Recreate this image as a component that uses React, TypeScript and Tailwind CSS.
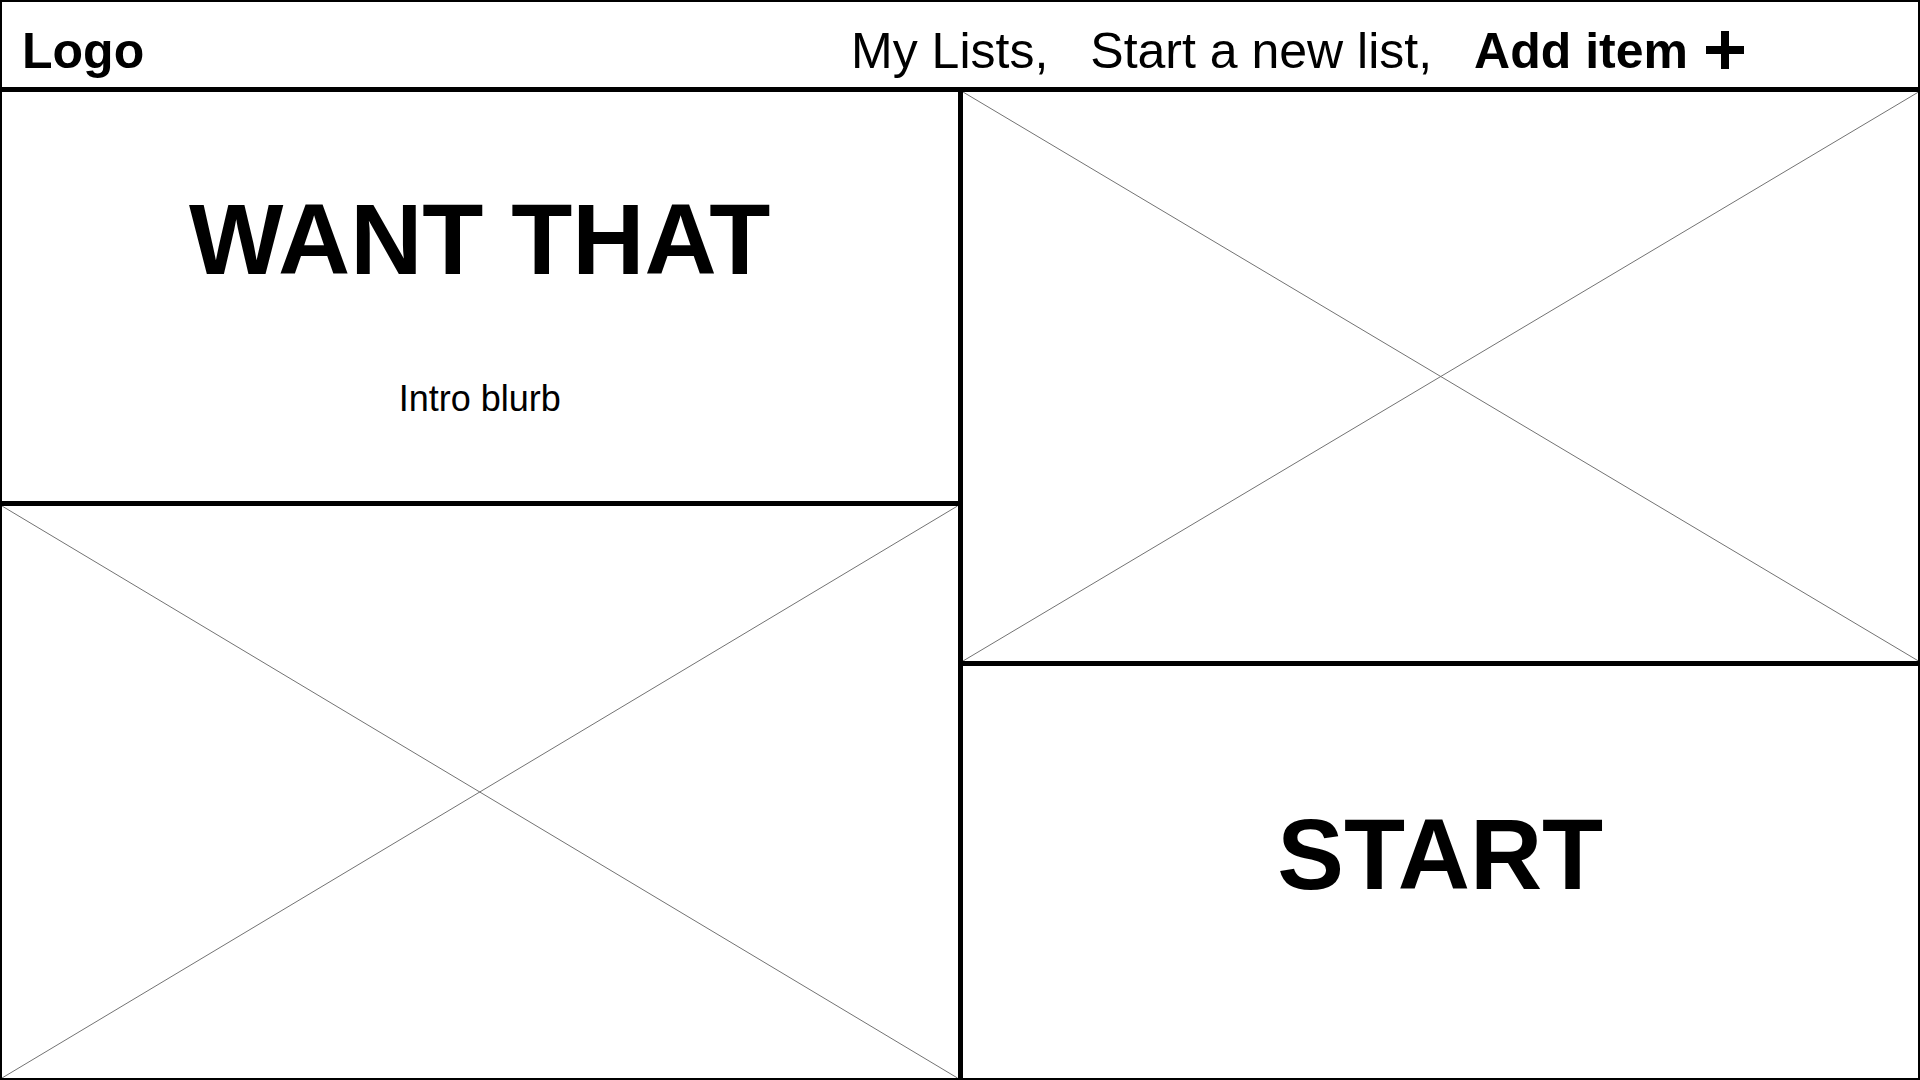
function Placeholder({ label }: { label: string }) {
  return (
    <div className="min-h-0 bg-white">
      <svg
        role="img"
        aria-label={label}
        viewBox="0 0 100 100"
        preserveAspectRatio="none"
        className="block size-full text-neutral-500"
        stroke="currentColor"
        strokeWidth="1"
      >
        <line x1="0" y1="0" x2="100" y2="100" vectorEffect="non-scaling-stroke" />
        <line x1="100" y1="0" x2="0" y2="100" vectorEffect="non-scaling-stroke" />
      </svg>
    </div>
  );
}

function PlusIcon() {
  return (
    <svg viewBox="0 0 38 38" className="mb-0.5 size-[38px]" fill="currentColor" aria-hidden="true">
      <path d="M15 0h8v15h15v8H23v15h-8V23H0v-8h15z" />
    </svg>
  );
}

export default function App() {
  return (
    <div className="flex h-screen flex-col gap-[5px] border-2 border-black bg-black font-['Liberation_Sans',Arial,sans-serif] text-black">
      <header className="flex h-[85px] shrink-0 items-center justify-between bg-white pt-3 pr-[174px] pl-5 text-[50px] leading-none whitespace-nowrap">
        <a href="#" className="font-bold">
          Logo
        </a>
        <nav className="flex items-center gap-[42px]">
          <a href="#lists">My Lists,</a>
          <a href="#new">Start a new list,</a>
          <a href="#add" className="flex items-center gap-[18px] font-bold">
            Add item
            <PlusIcon />
          </a>
        </nav>
      </header>
      <main className="grid min-h-0 flex-1 grid-cols-2 gap-[5px]">
        <div className="grid min-h-0 grid-rows-[409fr_572fr] gap-[5px]">
          <section className="flex flex-col items-center justify-center gap-[92px] bg-white pt-3 leading-none">
            <h1 className="text-[100px] leading-none font-bold">WANT THAT</h1>
            <p className="text-[36px] leading-none">Intro blurb</p>
          </section>
          <Placeholder label="Lower image placeholder" />
        </div>
        <div className="grid min-h-0 grid-rows-[569fr_412fr] gap-[5px]">
          <Placeholder label="Upper image placeholder" />
          <section className="flex items-center justify-center bg-white pb-9">
            <button type="button" className="text-[100px] leading-none font-bold">
              START
            </button>
          </section>
        </div>
      </main>
    </div>
  );
}
